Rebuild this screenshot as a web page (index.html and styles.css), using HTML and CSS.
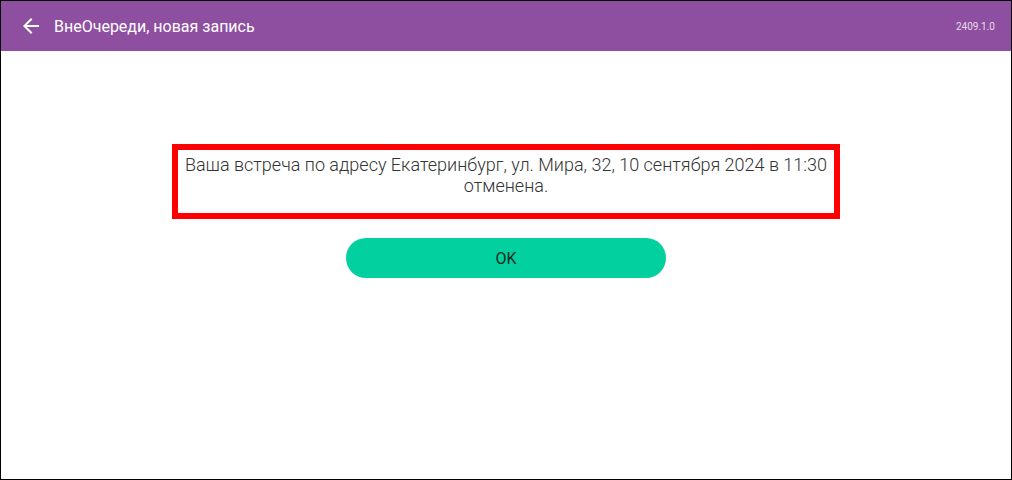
FILE: index.html
```html
<!DOCTYPE html>
<html lang="ru">
<head>
<meta charset="utf-8">
<link rel="stylesheet" href="styles.css">
</head>
<body>
<div class="app">
  <header class="topbar">
    <button class="back" aria-label="Назад">
      <svg width="24" height="24" viewBox="0 0 24 24"><path d="M20 11H7.83l5.59-5.59L12 4l-8 8 8 8 1.41-1.41L7.83 13H20v-2z" fill="#fff"/></svg>
    </button>
    <h1 class="title">ВнеОчереди, новая запись</h1>
    <span class="version">2409.1.0</span>
  </header>
  <main class="content">
    <div class="message">
      <p>Ваша встреча по адресу Екатеринбург, ул. Мира, 32, 10 сентября 2024 в 11:30<br>отменена.</p>
    </div>
    <button class="ok">OK</button>
  </main>
</div>
</body>
</html>
```
FILE: styles.css
```css
* { box-sizing: border-box; }
html, body { margin: 0; padding: 0; }
body {
  width: 1012px;
  height: 480px;
  font-family: Roboto, "Noto Sans", sans-serif;
  background: #fff;
}
.app {
  width: 1012px;
  height: 480px;
  border: 1px solid #000;
  display: flex;
  flex-direction: column;
}
.topbar {
  height: 50px;
  flex: none;
  background: #8f4fa0;
  display: flex;
  align-items: center;
  padding: 0 16px 0 18px;
}
.back {
  width: 24px;
  height: 24px;
  padding: 0;
  border: 0;
  background: none;
  display: flex;
  margin-right: 11px;
}
.title {
  margin: 0;
  font-size: 16px;
  font-weight: 400;
  color: #fff;
  flex: 1;
}
.version {
  font-size: 10px;
  color: #e6dcea;
}
.content {
  display: flex;
  flex-direction: column;
  align-items: center;
  padding-top: 93px;
}
.message {
  width: 668px;
  border: 6px solid #ff0000;
  padding: 4px 4px 17px;
  text-align: center;
}
.message p {
  margin: 0;
  font-size: 18px;
  font-weight: 300;
  line-height: 21px;
  color: #333;
  white-space: nowrap;
}
.ok {
  margin-top: 19px;
  width: 320px;
  height: 40px;
  border: 0;
  border-radius: 20px;
  background: #02d19f;
  font-family: Roboto, sans-serif;
  font-size: 16px;
  font-weight: 400;
  color: #0f2a22;
}
```
